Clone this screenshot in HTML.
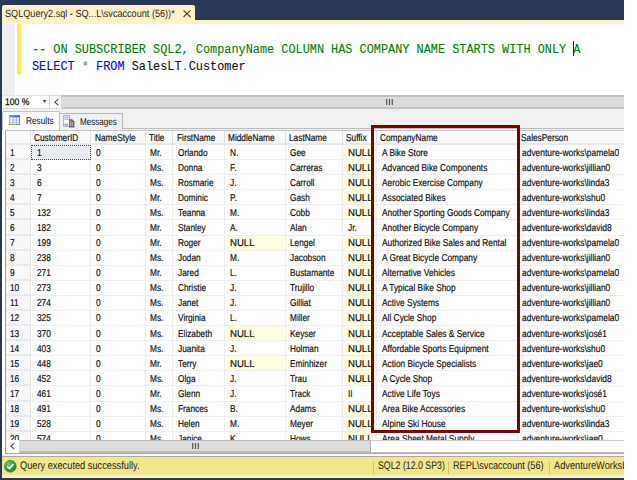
<!DOCTYPE html>
<html><head><meta charset="utf-8"><title>SQLQuery2.sql</title>
<style>
html,body{margin:0;padding:0;background:#fff;}
body{width:637px;height:480px;position:relative;overflow:hidden;font-family:"Liberation Sans",sans-serif;}
#win{position:absolute;left:0;top:0;width:624px;height:480px;background:#fff;overflow:hidden;}
.abs{position:absolute;}
#navy{left:0;top:0;width:625px;height:21px;background:#293955;}
#strip{left:2px;top:20px;width:623px;height:4px;background:#fff2c9;}
#tab{left:2px;top:5px;width:193px;height:17px;background:#fff2c9;border-radius:2px 2px 0 0;font-size:10.5px;color:#1e1e1e;line-height:16px;padding-left:3px;box-sizing:border-box;white-space:nowrap;}
#lborder{left:0;top:0;width:2px;height:480px;background:#293955;}
#bborder{left:0;top:478px;width:625px;height:2px;background:#293955;}
#margin{left:2px;top:24px;width:13px;height:71px;background:#efefef;}
#ybar{left:17px;top:24px;width:4px;height:50px;background:#ffe85a;}
.code{left:31.5px;font-family:"Liberation Mono",monospace;font-size:12px;white-space:pre;line-height:17px;height:17px;transform:scaleX(0.989);transform-origin:0 50%;-webkit-text-stroke:0.1px;}
.cm{color:#008000}.kw{color:#0000ff}.gr{color:#808080}.bk{color:#111}
#caret{left:573px;top:41px;width:1px;height:15px;background:#222;}
#zoombar{left:2px;top:95px;width:623px;height:14px;background:#fff;border-top:1px solid #e6e6e6;border-bottom:1px solid #dcdcdc;box-sizing:border-box;}
#ztext{-webkit-text-stroke:0.25px;left:4.8px;top:95.2px;font-size:9.5px;line-height:13px;color:#111;}
#track{left:62px;top:95px;width:563px;height:14px;background:#dcdcdc;border-top:2px solid #c0c0c0;border-bottom:2px solid #c6c6c6;box-sizing:border-box;}
#tabsrow{left:2px;top:109px;width:623px;height:21px;background:#f0f0f0;}
#rtab{left:2px;top:111px;width:58px;height:19px;background:#fcfcfc;border:1px solid #c0c0c6;border-bottom:none;border-radius:2px 2px 0 0;box-sizing:border-box;font-size:10px;line-height:17px;padding-left:22.7px;color:#111;}
#mtab{left:59px;top:113px;width:64px;height:16px;background:#f0f0f0;border:1px solid #b8b8b8;border-left:none;border-bottom:none;box-sizing:border-box;font-size:10px;line-height:15px;padding-left:20.5px;color:#111;}
#gridbg{left:5px;top:130px;width:620px;height:324px;background:#fff;border-left:1px solid #a0a0a0;border-top:1px solid #c0c4cc;border-bottom:1px solid #a8a8a8;box-sizing:border-box;}
#grid{left:0;top:0;width:625px;height:440px;overflow:hidden;}
.hc,.c{position:absolute;box-sizing:border-box;height:15px;line-height:14px;padding-top:0px;font-size:10px;white-space:nowrap;overflow:hidden;color:#111;-webkit-text-stroke:0.2px;}
.t{position:relative;display:inline-block;transform:scaleX(0.83) rotate(0.03deg);transform-origin:0 50%;white-space:pre;}
.u{display:inline-block;transform:scaleX(0.91) rotate(0.03deg);transform-origin:0 50%;white-space:pre;}
.hc{top:131px;height:14px;line-height:13px;background:#f9f9f9;border-right:1px solid #e0e0e0;border-bottom:2px solid #e9e9e9;}
.nul .t{transform:scaleX(0.96) rotate(0.03deg);}
.k8 .t{transform:scaleX(0.835) rotate(0.03deg);}
.k9 .t{transform:scaleX(0.845) rotate(0.03deg);}
.c{background:#fff;border-right:1px solid #ededed;border-bottom:1px solid #efefef;}
.c.rn{background:#f8f8f8;border-right:1px solid #e6e6e6;border-bottom:2px solid #e9e9e9;}
.c.nul{background:#ffffe1;}
.c.sel{background:#e9edf3;outline:1px dotted #444;outline-offset:-1px;}
#redbox{left:371px;top:125px;width:149px;height:308px;border:3px solid #800000;box-sizing:border-box;}
#hscroll{left:19px;top:440px;width:352px;height:13px;background:#dcdcdc;border-top:1px solid #bcbcbc;border-bottom:2px solid #bdbdbd;border-right:1px solid #b4b4b4;box-sizing:border-box;}
#htrack{left:6px;top:440px;width:619px;height:13px;background:#fdfdfd;border-top:1px solid #cfcfcf;border-bottom:1px solid #c0c0c0;box-sizing:border-box;}
#hleft{left:6px;top:440px;width:13px;height:13px;background:#fff;}
#below{left:2px;top:454px;width:623px;height:3px;background:#fafafa;}
#status{left:2px;top:456px;width:623px;height:19px;background:#f0e68c;border-top:1px solid #a8a8b0;box-sizing:border-box;font-size:11px;color:#1e1e1e;}
#status2{left:2px;top:475px;width:623px;height:3px;background:linear-gradient(#f4ecb0,#fbf6dc);}
.st{position:absolute;top:-0.6px;line-height:18px;white-space:pre;transform:scaleX(0.84) rotate(0.03deg);transform-origin:0 50%;}
.sep{position:absolute;top:4px;width:1px;height:13px;background:#cfc678;}
.hc .t{top:-0.5px}
.r0 .t{top:0.70px}
.r1 .t{top:0.77px}
.r2 .t{top:0.84px}
.r3 .t{top:0.91px}
.r4 .t{top:0.98px}
.r5 .t{top:1.05px}
.r6 .t{top:0.12px}
.r7 .t{top:0.19px}
.r8 .t{top:0.26px}
.r9 .t{top:0.33px}
.r10 .t{top:0.40px}
.r11 .t{top:0.47px}
.r12 .t{top:0.54px}
.r13 .t{top:0.61px}
.r14 .t{top:0.68px}
.r15 .t{top:0.75px}
.r16 .t{top:0.82px}
.r17 .t{top:-0.11px}
.r18 .t{top:-0.04px}
.r19 .t{top:0.03px}
</style></head><body>
<div id="win">
<div id="navy" class="abs"></div>
<div id="strip" class="abs"></div>
<div id="tab" class="abs"><span class="u" style="transform:scaleX(0.868) rotate(0.03deg)">SQLQuery2.sql - SQ...L\svcaccount (56))*</span><svg class="abs" style="left:181px;top:5.2px" width="8" height="7.4" viewBox="0 0 8 7.4"><path d="M0.5 0.4L7.5 7M7.5 0.4L0.5 7" stroke="#54482c" stroke-width="1.15" fill="none"/></svg></div>
<div id="margin" class="abs"></div>
<div id="ybar" class="abs"></div>
<div class="abs code" style="top:41.5px"><span class="cm">-- ON SUBSCRIBER SQL2, CompanyName COLUMN HAS COMPANY NAME STARTS WITH ONLY A</span></div>
<div class="abs code" style="top:58.8px"><span class="kw">SELECT</span> <span class="gr">*</span> <span class="kw">FROM</span> <span class="bk">SalesLT</span><span class="gr">.</span><span class="bk">Customer</span></div>
<div id="caret" class="abs"></div>
<div id="zoombar" class="abs"></div>
<div id="ztext" class="abs"><span class="u">100 %</span></div>
<svg class="abs" style="left:42px;top:100px" width="5" height="3" viewBox="0 0 5 3"><path d="M0.5 0.2H4.5L2.5 2.8Z" fill="#222"/></svg>
<div id="track" class="abs"></div>
<div class="abs" style="left:49px;top:95px;width:13px;height:14px;background:#fff;border:1px solid #d8d8d8;box-sizing:border-box;"></div>
<svg class="abs" style="left:53.5px;top:98.5px" width="5" height="7" viewBox="0 0 5 7"><path d="M4.2 0.3L0.9 3.2L4.2 6.1" stroke="#444" stroke-width="1.1" fill="none"/></svg>
<svg class="abs" style="left:386px;top:99px" width="7" height="6" viewBox="0 0 7 6"><path d="M0.7 0V6M3.5 0V6M6.3 0V6" stroke="#555" stroke-width="1.2"/></svg>
<div id="tabsrow" class="abs"></div>
<div class="abs" style="left:2px;top:128px;width:623px;height:1px;background:#bcbcbc"></div>
<div id="mtab" class="abs"><span class="t" style="transform:scaleX(0.81) rotate(0.03deg)">Messages</span></div>
<div id="rtab" class="abs"><span class="t">Results</span></div>
<svg class="abs" style="left:8.5px;top:114.7px" width="11.5" height="10.5" viewBox="0 0 11.5 10.5"><defs><linearGradient id="rb" x1="0" x2="1" y1="0" y2="0"><stop offset="0" stop-color="#6a98ec"/><stop offset="1" stop-color="#2c5fd8"/></linearGradient></defs><rect x="0.2" y="0.2" width="11" height="10" fill="#fdfdff"/><path d="M3.9 2.4V10M7.5 2.4V10M0.3 5H11M0.3 7.6H11" stroke="#aab2cc" stroke-width="0.9" fill="none"/><rect x="0.2" y="0.1" width="11" height="2.4" fill="url(#rb)"/><path d="M0.6 2.4V10" stroke="#a4acd0" stroke-width="0.9"/><path d="M10.8 2.2V10.2" stroke="#4c5474" stroke-width="0.9"/><path d="M0.3 9.9H11.2" stroke="#454550" stroke-width="0.9"/></svg>
<svg class="abs" style="left:63px;top:115px" width="12" height="13" viewBox="0 0 12 13"><rect x="0.6" y="0.6" width="5.8" height="10.8" fill="#f8f9ff" stroke="#a4a8d8" stroke-width="1"/><path d="M1.5 2.2H5.5M1.5 4.2H5.5" stroke="#8a94d0" stroke-width="0.9"/><rect x="1.6" y="8.5" width="3.4" height="2.2" fill="#86c08a"/><path d="M6 4.2H9.2L11.4 6.6V12.4H6Z" fill="#5a5aa8"/><rect x="6.8" y="5.6" width="1.6" height="5.6" fill="#f08870"/><rect x="8.6" y="6.8" width="1.4" height="4.4" fill="#78c8a0"/></svg>
<div id="gridbg" class="abs"></div>
<div id="grid" class="abs">
<div class="hc" style="left:6px;width:25px;padding-left:0px"><span class="t"></span></div>
<div class="hc" style="left:31px;width:60px;padding-left:3px"><span class="t">CustomerID</span></div>
<div class="hc" style="left:91px;width:55px;padding-left:4px"><span class="t">NameStyle</span></div>
<div class="hc" style="left:146px;width:27px;padding-left:3px"><span class="t">Title</span></div>
<div class="hc" style="left:173px;width:52px;padding-left:4px"><span class="t">FirstName</span></div>
<div class="hc" style="left:225px;width:61px;padding-left:3px"><span class="t">MiddleName</span></div>
<div class="hc" style="left:286px;width:57px;padding-left:3px"><span class="t">LastName</span></div>
<div class="hc" style="left:343px;width:34px;padding-left:3px"><span class="t">Suffix</span></div>
<div class="hc" style="left:377px;width:141px;padding-left:3px"><span class="t">CompanyName</span></div>
<div class="hc" style="left:518px;width:107px;padding-left:3px"><span class="t">SalesPerson</span></div>
<div class="c k0 r0 rn" style="left:6px;top:145px;width:25px;height:15px;padding-left:4px"><span class="t">1</span></div>
<div class="c k1 r0 sel" style="left:31px;top:145px;width:60px;height:15px;padding-left:6px"><span class="t">1</span></div>
<div class="c k2 r0" style="left:91px;top:145px;width:55px;height:15px;padding-left:5px"><span class="t">0</span></div>
<div class="c k3 r0" style="left:146px;top:145px;width:27px;height:15px;padding-left:4px"><span class="t">Mr.</span></div>
<div class="c k4 r0" style="left:173px;top:145px;width:52px;height:15px;padding-left:5px"><span class="t">Orlando</span></div>
<div class="c k5 r0" style="left:225px;top:145px;width:61px;height:15px;padding-left:5px"><span class="t">N.</span></div>
<div class="c k6 r0" style="left:286px;top:145px;width:57px;height:15px;padding-left:4px"><span class="t">Gee</span></div>
<div class="c k7 r0 nul" style="left:343px;top:145px;width:34px;height:15px;padding-left:5px"><span class="t">NULL</span></div>
<div class="c k8 r0" style="left:377px;top:145px;width:141px;height:15px;padding-left:5px"><span class="t">A Bike Store</span></div>
<div class="c k9 r0" style="left:518px;top:145px;width:107px;height:15px;padding-left:4px"><span class="t">adventure-works\pamela0</span></div>
<div class="c k0 r1 rn" style="left:6px;top:160px;width:25px;height:15px;padding-left:4px"><span class="t">2</span></div>
<div class="c k1 r1" style="left:31px;top:160px;width:60px;height:15px;padding-left:6px"><span class="t">3</span></div>
<div class="c k2 r1" style="left:91px;top:160px;width:55px;height:15px;padding-left:5px"><span class="t">0</span></div>
<div class="c k3 r1" style="left:146px;top:160px;width:27px;height:15px;padding-left:4px"><span class="t">Ms.</span></div>
<div class="c k4 r1" style="left:173px;top:160px;width:52px;height:15px;padding-left:5px"><span class="t">Donna</span></div>
<div class="c k5 r1" style="left:225px;top:160px;width:61px;height:15px;padding-left:5px"><span class="t">F.</span></div>
<div class="c k6 r1" style="left:286px;top:160px;width:57px;height:15px;padding-left:4px"><span class="t">Carreras</span></div>
<div class="c k7 r1 nul" style="left:343px;top:160px;width:34px;height:15px;padding-left:5px"><span class="t">NULL</span></div>
<div class="c k8 r1" style="left:377px;top:160px;width:141px;height:15px;padding-left:5px"><span class="t">Advanced Bike Components</span></div>
<div class="c k9 r1" style="left:518px;top:160px;width:107px;height:15px;padding-left:4px"><span class="t">adventure-works\jillian0</span></div>
<div class="c k0 r2 rn" style="left:6px;top:175px;width:25px;height:15px;padding-left:4px"><span class="t">3</span></div>
<div class="c k1 r2" style="left:31px;top:175px;width:60px;height:15px;padding-left:6px"><span class="t">6</span></div>
<div class="c k2 r2" style="left:91px;top:175px;width:55px;height:15px;padding-left:5px"><span class="t">0</span></div>
<div class="c k3 r2" style="left:146px;top:175px;width:27px;height:15px;padding-left:4px"><span class="t">Ms.</span></div>
<div class="c k4 r2" style="left:173px;top:175px;width:52px;height:15px;padding-left:5px"><span class="t">Rosmarie</span></div>
<div class="c k5 r2" style="left:225px;top:175px;width:61px;height:15px;padding-left:5px"><span class="t">J.</span></div>
<div class="c k6 r2" style="left:286px;top:175px;width:57px;height:15px;padding-left:4px"><span class="t">Carroll</span></div>
<div class="c k7 r2 nul" style="left:343px;top:175px;width:34px;height:15px;padding-left:5px"><span class="t">NULL</span></div>
<div class="c k8 r2" style="left:377px;top:175px;width:141px;height:15px;padding-left:5px"><span class="t">Aerobic Exercise Company</span></div>
<div class="c k9 r2" style="left:518px;top:175px;width:107px;height:15px;padding-left:4px"><span class="t">adventure-works\linda3</span></div>
<div class="c k0 r3 rn" style="left:6px;top:190px;width:25px;height:15px;padding-left:4px"><span class="t">4</span></div>
<div class="c k1 r3" style="left:31px;top:190px;width:60px;height:15px;padding-left:6px"><span class="t">7</span></div>
<div class="c k2 r3" style="left:91px;top:190px;width:55px;height:15px;padding-left:5px"><span class="t">0</span></div>
<div class="c k3 r3" style="left:146px;top:190px;width:27px;height:15px;padding-left:4px"><span class="t">Mr.</span></div>
<div class="c k4 r3" style="left:173px;top:190px;width:52px;height:15px;padding-left:5px"><span class="t">Dominic</span></div>
<div class="c k5 r3" style="left:225px;top:190px;width:61px;height:15px;padding-left:5px"><span class="t">P.</span></div>
<div class="c k6 r3" style="left:286px;top:190px;width:57px;height:15px;padding-left:4px"><span class="t">Gash</span></div>
<div class="c k7 r3 nul" style="left:343px;top:190px;width:34px;height:15px;padding-left:5px"><span class="t">NULL</span></div>
<div class="c k8 r3" style="left:377px;top:190px;width:141px;height:15px;padding-left:5px"><span class="t">Associated Bikes</span></div>
<div class="c k9 r3" style="left:518px;top:190px;width:107px;height:15px;padding-left:4px"><span class="t">adventure-works\shu0</span></div>
<div class="c k0 r4 rn" style="left:6px;top:205px;width:25px;height:15px;padding-left:4px"><span class="t">5</span></div>
<div class="c k1 r4" style="left:31px;top:205px;width:60px;height:15px;padding-left:6px"><span class="t">132</span></div>
<div class="c k2 r4" style="left:91px;top:205px;width:55px;height:15px;padding-left:5px"><span class="t">0</span></div>
<div class="c k3 r4" style="left:146px;top:205px;width:27px;height:15px;padding-left:4px"><span class="t">Ms.</span></div>
<div class="c k4 r4" style="left:173px;top:205px;width:52px;height:15px;padding-left:5px"><span class="t">Teanna</span></div>
<div class="c k5 r4" style="left:225px;top:205px;width:61px;height:15px;padding-left:5px"><span class="t">M.</span></div>
<div class="c k6 r4" style="left:286px;top:205px;width:57px;height:15px;padding-left:4px"><span class="t">Cobb</span></div>
<div class="c k7 r4 nul" style="left:343px;top:205px;width:34px;height:15px;padding-left:5px"><span class="t">NULL</span></div>
<div class="c k8 r4" style="left:377px;top:205px;width:141px;height:15px;padding-left:5px"><span class="t">Another Sporting Goods Company</span></div>
<div class="c k9 r4" style="left:518px;top:205px;width:107px;height:15px;padding-left:4px"><span class="t">adventure-works\linda3</span></div>
<div class="c k0 r5 rn" style="left:6px;top:220px;width:25px;height:16px;padding-left:4px"><span class="t">6</span></div>
<div class="c k1 r5" style="left:31px;top:220px;width:60px;height:16px;padding-left:6px"><span class="t">182</span></div>
<div class="c k2 r5" style="left:91px;top:220px;width:55px;height:16px;padding-left:5px"><span class="t">0</span></div>
<div class="c k3 r5" style="left:146px;top:220px;width:27px;height:16px;padding-left:4px"><span class="t">Mr.</span></div>
<div class="c k4 r5" style="left:173px;top:220px;width:52px;height:16px;padding-left:5px"><span class="t">Stanley</span></div>
<div class="c k5 r5" style="left:225px;top:220px;width:61px;height:16px;padding-left:5px"><span class="t">A.</span></div>
<div class="c k6 r5" style="left:286px;top:220px;width:57px;height:16px;padding-left:4px"><span class="t">Alan</span></div>
<div class="c k7 r5" style="left:343px;top:220px;width:34px;height:16px;padding-left:5px"><span class="t">Jr.</span></div>
<div class="c k8 r5" style="left:377px;top:220px;width:141px;height:16px;padding-left:5px"><span class="t">Another Bicycle Company</span></div>
<div class="c k9 r5" style="left:518px;top:220px;width:107px;height:16px;padding-left:4px"><span class="t">adventure-works\david8</span></div>
<div class="c k0 r6 rn" style="left:6px;top:236px;width:25px;height:15px;padding-left:4px"><span class="t">7</span></div>
<div class="c k1 r6" style="left:31px;top:236px;width:60px;height:15px;padding-left:6px"><span class="t">199</span></div>
<div class="c k2 r6" style="left:91px;top:236px;width:55px;height:15px;padding-left:5px"><span class="t">0</span></div>
<div class="c k3 r6" style="left:146px;top:236px;width:27px;height:15px;padding-left:4px"><span class="t">Mr.</span></div>
<div class="c k4 r6" style="left:173px;top:236px;width:52px;height:15px;padding-left:5px"><span class="t">Roger</span></div>
<div class="c k5 r6 nul" style="left:225px;top:236px;width:61px;height:15px;padding-left:5px"><span class="t">NULL</span></div>
<div class="c k6 r6" style="left:286px;top:236px;width:57px;height:15px;padding-left:4px"><span class="t">Lengel</span></div>
<div class="c k7 r6 nul" style="left:343px;top:236px;width:34px;height:15px;padding-left:5px"><span class="t">NULL</span></div>
<div class="c k8 r6" style="left:377px;top:236px;width:141px;height:15px;padding-left:5px"><span class="t">Authorized Bike Sales and Rental</span></div>
<div class="c k9 r6" style="left:518px;top:236px;width:107px;height:15px;padding-left:4px"><span class="t">adventure-works\pamela0</span></div>
<div class="c k0 r7 rn" style="left:6px;top:251px;width:25px;height:15px;padding-left:4px"><span class="t">8</span></div>
<div class="c k1 r7" style="left:31px;top:251px;width:60px;height:15px;padding-left:6px"><span class="t">238</span></div>
<div class="c k2 r7" style="left:91px;top:251px;width:55px;height:15px;padding-left:5px"><span class="t">0</span></div>
<div class="c k3 r7" style="left:146px;top:251px;width:27px;height:15px;padding-left:4px"><span class="t">Ms.</span></div>
<div class="c k4 r7" style="left:173px;top:251px;width:52px;height:15px;padding-left:5px"><span class="t">Jodan</span></div>
<div class="c k5 r7" style="left:225px;top:251px;width:61px;height:15px;padding-left:5px"><span class="t">M.</span></div>
<div class="c k6 r7" style="left:286px;top:251px;width:57px;height:15px;padding-left:4px"><span class="t">Jacobson</span></div>
<div class="c k7 r7 nul" style="left:343px;top:251px;width:34px;height:15px;padding-left:5px"><span class="t">NULL</span></div>
<div class="c k8 r7" style="left:377px;top:251px;width:141px;height:15px;padding-left:5px"><span class="t">A Great Bicycle Company</span></div>
<div class="c k9 r7" style="left:518px;top:251px;width:107px;height:15px;padding-left:4px"><span class="t">adventure-works\jillian0</span></div>
<div class="c k0 r8 rn" style="left:6px;top:266px;width:25px;height:15px;padding-left:4px"><span class="t">9</span></div>
<div class="c k1 r8" style="left:31px;top:266px;width:60px;height:15px;padding-left:6px"><span class="t">271</span></div>
<div class="c k2 r8" style="left:91px;top:266px;width:55px;height:15px;padding-left:5px"><span class="t">0</span></div>
<div class="c k3 r8" style="left:146px;top:266px;width:27px;height:15px;padding-left:4px"><span class="t">Mr.</span></div>
<div class="c k4 r8" style="left:173px;top:266px;width:52px;height:15px;padding-left:5px"><span class="t">Jared</span></div>
<div class="c k5 r8" style="left:225px;top:266px;width:61px;height:15px;padding-left:5px"><span class="t">L.</span></div>
<div class="c k6 r8" style="left:286px;top:266px;width:57px;height:15px;padding-left:4px"><span class="t">Bustamante</span></div>
<div class="c k7 r8 nul" style="left:343px;top:266px;width:34px;height:15px;padding-left:5px"><span class="t">NULL</span></div>
<div class="c k8 r8" style="left:377px;top:266px;width:141px;height:15px;padding-left:5px"><span class="t">Alternative Vehicles</span></div>
<div class="c k9 r8" style="left:518px;top:266px;width:107px;height:15px;padding-left:4px"><span class="t">adventure-works\pamela0</span></div>
<div class="c k0 r9 rn" style="left:6px;top:281px;width:25px;height:15px;padding-left:4px"><span class="t">10</span></div>
<div class="c k1 r9" style="left:31px;top:281px;width:60px;height:15px;padding-left:6px"><span class="t">273</span></div>
<div class="c k2 r9" style="left:91px;top:281px;width:55px;height:15px;padding-left:5px"><span class="t">0</span></div>
<div class="c k3 r9" style="left:146px;top:281px;width:27px;height:15px;padding-left:4px"><span class="t">Ms.</span></div>
<div class="c k4 r9" style="left:173px;top:281px;width:52px;height:15px;padding-left:5px"><span class="t">Christie</span></div>
<div class="c k5 r9" style="left:225px;top:281px;width:61px;height:15px;padding-left:5px"><span class="t">J.</span></div>
<div class="c k6 r9" style="left:286px;top:281px;width:57px;height:15px;padding-left:4px"><span class="t">Trujillo</span></div>
<div class="c k7 r9 nul" style="left:343px;top:281px;width:34px;height:15px;padding-left:5px"><span class="t">NULL</span></div>
<div class="c k8 r9" style="left:377px;top:281px;width:141px;height:15px;padding-left:5px"><span class="t">A Typical Bike Shop</span></div>
<div class="c k9 r9" style="left:518px;top:281px;width:107px;height:15px;padding-left:4px"><span class="t">adventure-works\jillian0</span></div>
<div class="c k0 r10 rn" style="left:6px;top:296px;width:25px;height:15px;padding-left:4px"><span class="t">11</span></div>
<div class="c k1 r10" style="left:31px;top:296px;width:60px;height:15px;padding-left:6px"><span class="t">274</span></div>
<div class="c k2 r10" style="left:91px;top:296px;width:55px;height:15px;padding-left:5px"><span class="t">0</span></div>
<div class="c k3 r10" style="left:146px;top:296px;width:27px;height:15px;padding-left:4px"><span class="t">Ms.</span></div>
<div class="c k4 r10" style="left:173px;top:296px;width:52px;height:15px;padding-left:5px"><span class="t">Janet</span></div>
<div class="c k5 r10" style="left:225px;top:296px;width:61px;height:15px;padding-left:5px"><span class="t">J.</span></div>
<div class="c k6 r10" style="left:286px;top:296px;width:57px;height:15px;padding-left:4px"><span class="t">Gilliat</span></div>
<div class="c k7 r10 nul" style="left:343px;top:296px;width:34px;height:15px;padding-left:5px"><span class="t">NULL</span></div>
<div class="c k8 r10" style="left:377px;top:296px;width:141px;height:15px;padding-left:5px"><span class="t">Active Systems</span></div>
<div class="c k9 r10" style="left:518px;top:296px;width:107px;height:15px;padding-left:4px"><span class="t">adventure-works\jillian0</span></div>
<div class="c k0 r11 rn" style="left:6px;top:311px;width:25px;height:15px;padding-left:4px"><span class="t">12</span></div>
<div class="c k1 r11" style="left:31px;top:311px;width:60px;height:15px;padding-left:6px"><span class="t">325</span></div>
<div class="c k2 r11" style="left:91px;top:311px;width:55px;height:15px;padding-left:5px"><span class="t">0</span></div>
<div class="c k3 r11" style="left:146px;top:311px;width:27px;height:15px;padding-left:4px"><span class="t">Ms.</span></div>
<div class="c k4 r11" style="left:173px;top:311px;width:52px;height:15px;padding-left:5px"><span class="t">Virginia</span></div>
<div class="c k5 r11" style="left:225px;top:311px;width:61px;height:15px;padding-left:5px"><span class="t">L.</span></div>
<div class="c k6 r11" style="left:286px;top:311px;width:57px;height:15px;padding-left:4px"><span class="t">Miller</span></div>
<div class="c k7 r11 nul" style="left:343px;top:311px;width:34px;height:15px;padding-left:5px"><span class="t">NULL</span></div>
<div class="c k8 r11" style="left:377px;top:311px;width:141px;height:15px;padding-left:5px"><span class="t">All Cycle Shop</span></div>
<div class="c k9 r11" style="left:518px;top:311px;width:107px;height:15px;padding-left:4px"><span class="t">adventure-works\pamela0</span></div>
<div class="c k0 r12 rn" style="left:6px;top:326px;width:25px;height:15px;padding-left:4px"><span class="t">13</span></div>
<div class="c k1 r12" style="left:31px;top:326px;width:60px;height:15px;padding-left:6px"><span class="t">370</span></div>
<div class="c k2 r12" style="left:91px;top:326px;width:55px;height:15px;padding-left:5px"><span class="t">0</span></div>
<div class="c k3 r12" style="left:146px;top:326px;width:27px;height:15px;padding-left:4px"><span class="t">Ms.</span></div>
<div class="c k4 r12" style="left:173px;top:326px;width:52px;height:15px;padding-left:5px"><span class="t">Elizabeth</span></div>
<div class="c k5 r12 nul" style="left:225px;top:326px;width:61px;height:15px;padding-left:5px"><span class="t">NULL</span></div>
<div class="c k6 r12" style="left:286px;top:326px;width:57px;height:15px;padding-left:4px"><span class="t">Keyser</span></div>
<div class="c k7 r12 nul" style="left:343px;top:326px;width:34px;height:15px;padding-left:5px"><span class="t">NULL</span></div>
<div class="c k8 r12" style="left:377px;top:326px;width:141px;height:15px;padding-left:5px"><span class="t">Acceptable Sales &amp; Service</span></div>
<div class="c k9 r12" style="left:518px;top:326px;width:107px;height:15px;padding-left:4px"><span class="t">adventure-works\josé1</span></div>
<div class="c k0 r13 rn" style="left:6px;top:341px;width:25px;height:15px;padding-left:4px"><span class="t">14</span></div>
<div class="c k1 r13" style="left:31px;top:341px;width:60px;height:15px;padding-left:6px"><span class="t">403</span></div>
<div class="c k2 r13" style="left:91px;top:341px;width:55px;height:15px;padding-left:5px"><span class="t">0</span></div>
<div class="c k3 r13" style="left:146px;top:341px;width:27px;height:15px;padding-left:4px"><span class="t">Ms.</span></div>
<div class="c k4 r13" style="left:173px;top:341px;width:52px;height:15px;padding-left:5px"><span class="t">Juanita</span></div>
<div class="c k5 r13" style="left:225px;top:341px;width:61px;height:15px;padding-left:5px"><span class="t">J.</span></div>
<div class="c k6 r13" style="left:286px;top:341px;width:57px;height:15px;padding-left:4px"><span class="t">Holman</span></div>
<div class="c k7 r13 nul" style="left:343px;top:341px;width:34px;height:15px;padding-left:5px"><span class="t">NULL</span></div>
<div class="c k8 r13" style="left:377px;top:341px;width:141px;height:15px;padding-left:5px"><span class="t">Affordable Sports Equipment</span></div>
<div class="c k9 r13" style="left:518px;top:341px;width:107px;height:15px;padding-left:4px"><span class="t">adventure-works\shu0</span></div>
<div class="c k0 r14 rn" style="left:6px;top:356px;width:25px;height:15px;padding-left:4px"><span class="t">15</span></div>
<div class="c k1 r14" style="left:31px;top:356px;width:60px;height:15px;padding-left:6px"><span class="t">448</span></div>
<div class="c k2 r14" style="left:91px;top:356px;width:55px;height:15px;padding-left:5px"><span class="t">0</span></div>
<div class="c k3 r14" style="left:146px;top:356px;width:27px;height:15px;padding-left:4px"><span class="t">Mr.</span></div>
<div class="c k4 r14" style="left:173px;top:356px;width:52px;height:15px;padding-left:5px"><span class="t">Terry</span></div>
<div class="c k5 r14 nul" style="left:225px;top:356px;width:61px;height:15px;padding-left:5px"><span class="t">NULL</span></div>
<div class="c k6 r14" style="left:286px;top:356px;width:57px;height:15px;padding-left:4px"><span class="t">Eminhizer</span></div>
<div class="c k7 r14 nul" style="left:343px;top:356px;width:34px;height:15px;padding-left:5px"><span class="t">NULL</span></div>
<div class="c k8 r14" style="left:377px;top:356px;width:141px;height:15px;padding-left:5px"><span class="t">Action Bicycle Specialists</span></div>
<div class="c k9 r14" style="left:518px;top:356px;width:107px;height:15px;padding-left:4px"><span class="t">adventure-works\jae0</span></div>
<div class="c k0 r15 rn" style="left:6px;top:371px;width:25px;height:15px;padding-left:4px"><span class="t">16</span></div>
<div class="c k1 r15" style="left:31px;top:371px;width:60px;height:15px;padding-left:6px"><span class="t">452</span></div>
<div class="c k2 r15" style="left:91px;top:371px;width:55px;height:15px;padding-left:5px"><span class="t">0</span></div>
<div class="c k3 r15" style="left:146px;top:371px;width:27px;height:15px;padding-left:4px"><span class="t">Ms.</span></div>
<div class="c k4 r15" style="left:173px;top:371px;width:52px;height:15px;padding-left:5px"><span class="t">Olga</span></div>
<div class="c k5 r15" style="left:225px;top:371px;width:61px;height:15px;padding-left:5px"><span class="t">J.</span></div>
<div class="c k6 r15" style="left:286px;top:371px;width:57px;height:15px;padding-left:4px"><span class="t">Trau</span></div>
<div class="c k7 r15 nul" style="left:343px;top:371px;width:34px;height:15px;padding-left:5px"><span class="t">NULL</span></div>
<div class="c k8 r15" style="left:377px;top:371px;width:141px;height:15px;padding-left:5px"><span class="t">A Cycle Shop</span></div>
<div class="c k9 r15" style="left:518px;top:371px;width:107px;height:15px;padding-left:4px"><span class="t">adventure-works\david8</span></div>
<div class="c k0 r16 rn" style="left:6px;top:386px;width:25px;height:16px;padding-left:4px"><span class="t">17</span></div>
<div class="c k1 r16" style="left:31px;top:386px;width:60px;height:16px;padding-left:6px"><span class="t">461</span></div>
<div class="c k2 r16" style="left:91px;top:386px;width:55px;height:16px;padding-left:5px"><span class="t">0</span></div>
<div class="c k3 r16" style="left:146px;top:386px;width:27px;height:16px;padding-left:4px"><span class="t">Mr.</span></div>
<div class="c k4 r16" style="left:173px;top:386px;width:52px;height:16px;padding-left:5px"><span class="t">Glenn</span></div>
<div class="c k5 r16" style="left:225px;top:386px;width:61px;height:16px;padding-left:5px"><span class="t">J.</span></div>
<div class="c k6 r16" style="left:286px;top:386px;width:57px;height:16px;padding-left:4px"><span class="t">Track</span></div>
<div class="c k7 r16" style="left:343px;top:386px;width:34px;height:16px;padding-left:5px"><span class="t">II</span></div>
<div class="c k8 r16" style="left:377px;top:386px;width:141px;height:16px;padding-left:5px"><span class="t">Active Life Toys</span></div>
<div class="c k9 r16" style="left:518px;top:386px;width:107px;height:16px;padding-left:4px"><span class="t">adventure-works\josé1</span></div>
<div class="c k0 r17 rn" style="left:6px;top:402px;width:25px;height:15px;padding-left:4px"><span class="t">18</span></div>
<div class="c k1 r17" style="left:31px;top:402px;width:60px;height:15px;padding-left:6px"><span class="t">491</span></div>
<div class="c k2 r17" style="left:91px;top:402px;width:55px;height:15px;padding-left:5px"><span class="t">0</span></div>
<div class="c k3 r17" style="left:146px;top:402px;width:27px;height:15px;padding-left:4px"><span class="t">Ms.</span></div>
<div class="c k4 r17" style="left:173px;top:402px;width:52px;height:15px;padding-left:5px"><span class="t">Frances</span></div>
<div class="c k5 r17" style="left:225px;top:402px;width:61px;height:15px;padding-left:5px"><span class="t">B.</span></div>
<div class="c k6 r17" style="left:286px;top:402px;width:57px;height:15px;padding-left:4px"><span class="t">Adams</span></div>
<div class="c k7 r17 nul" style="left:343px;top:402px;width:34px;height:15px;padding-left:5px"><span class="t">NULL</span></div>
<div class="c k8 r17" style="left:377px;top:402px;width:141px;height:15px;padding-left:5px"><span class="t">Area Bike Accessories</span></div>
<div class="c k9 r17" style="left:518px;top:402px;width:107px;height:15px;padding-left:4px"><span class="t">adventure-works\shu0</span></div>
<div class="c k0 r18 rn" style="left:6px;top:417px;width:25px;height:15px;padding-left:4px"><span class="t">19</span></div>
<div class="c k1 r18" style="left:31px;top:417px;width:60px;height:15px;padding-left:6px"><span class="t">528</span></div>
<div class="c k2 r18" style="left:91px;top:417px;width:55px;height:15px;padding-left:5px"><span class="t">0</span></div>
<div class="c k3 r18" style="left:146px;top:417px;width:27px;height:15px;padding-left:4px"><span class="t">Ms.</span></div>
<div class="c k4 r18" style="left:173px;top:417px;width:52px;height:15px;padding-left:5px"><span class="t">Helen</span></div>
<div class="c k5 r18" style="left:225px;top:417px;width:61px;height:15px;padding-left:5px"><span class="t">M.</span></div>
<div class="c k6 r18" style="left:286px;top:417px;width:57px;height:15px;padding-left:4px"><span class="t">Meyer</span></div>
<div class="c k7 r18 nul" style="left:343px;top:417px;width:34px;height:15px;padding-left:5px"><span class="t">NULL</span></div>
<div class="c k8 r18" style="left:377px;top:417px;width:141px;height:15px;padding-left:5px"><span class="t">Alpine Ski House</span></div>
<div class="c k9 r18" style="left:518px;top:417px;width:107px;height:15px;padding-left:4px"><span class="t">adventure-works\linda3</span></div>
<div class="c k0 r19 rn" style="left:6px;top:432px;width:25px;height:15px;padding-left:4px"><span class="t">20</span></div>
<div class="c k1 r19" style="left:31px;top:432px;width:60px;height:15px;padding-left:6px"><span class="t">574</span></div>
<div class="c k2 r19" style="left:91px;top:432px;width:55px;height:15px;padding-left:5px"><span class="t">0</span></div>
<div class="c k3 r19" style="left:146px;top:432px;width:27px;height:15px;padding-left:4px"><span class="t">Ms.</span></div>
<div class="c k4 r19" style="left:173px;top:432px;width:52px;height:15px;padding-left:5px"><span class="t">Janice</span></div>
<div class="c k5 r19" style="left:225px;top:432px;width:61px;height:15px;padding-left:5px"><span class="t">K.</span></div>
<div class="c k6 r19" style="left:286px;top:432px;width:57px;height:15px;padding-left:4px"><span class="t">Hows</span></div>
<div class="c k7 r19 nul" style="left:343px;top:432px;width:34px;height:15px;padding-left:5px"><span class="t">NULL</span></div>
<div class="c k8 r19" style="left:377px;top:432px;width:141px;height:15px;padding-left:5px"><span class="t">Area Sheet Metal Supply</span></div>
<div class="c k9 r19" style="left:518px;top:432px;width:107px;height:15px;padding-left:4px"><span class="t">adventure-works\jae0</span></div>
</div>
<div id="htrack" class="abs"></div>
<div id="hscroll" class="abs"></div>
<div id="hleft" class="abs"></div><svg class="abs" style="left:10px;top:443px" width="5" height="7" viewBox="0 0 5 7"><path d="M4.2 0.3L0.9 3.2L4.2 6.1" stroke="#444" stroke-width="1.1" fill="none"/></svg>
<svg class="abs" style="left:192px;top:443px" width="7" height="6" viewBox="0 0 7 6"><path d="M0.7 0V6M3.5 0V6M6.3 0V6" stroke="#555" stroke-width="1.2"/></svg>
<div id="redbox" class="abs"></div>
<div id="below" class="abs"></div>
<div id="status" class="abs">
<svg class="abs" style="left:2.1px;top:3.2px" width="12.6" height="12.6" viewBox="0 0 14 14"><defs><radialGradient id="gg" cx="0.35" cy="0.3" r="0.8"><stop offset="0" stop-color="#78c878"/><stop offset="0.55" stop-color="#3a9e3a"/><stop offset="1" stop-color="#1f7a1f"/></radialGradient></defs><circle cx="7" cy="7" r="6.6" fill="url(#gg)" stroke="#2b7a2b" stroke-width="0.6"/><path d="M3.6 7.2L6 9.6L10.4 4.6" stroke="#fff" stroke-width="1.8" fill="none"/></svg>
<span class="st" style="left:18px">Query executed successfully.</span>
<span class="sep" style="left:371px"></span><span class="st" style="left:376px;transform:scaleX(0.798) rotate(0.03deg)">SQL2 (12.0 SP3)</span>
<span class="sep" style="left:446px"></span><span class="st" style="left:451px;transform:scaleX(0.827) rotate(0.03deg)">REPL\svcaccount (56)</span>
<span class="sep" style="left:547px"></span><span class="st" style="left:552px">AdventureWorksL</span>
</div>
<div id="status2" class="abs"></div>
<div id="lborder" class="abs"></div>
<div id="bborder" class="abs"></div>
</div>
</body></html>
